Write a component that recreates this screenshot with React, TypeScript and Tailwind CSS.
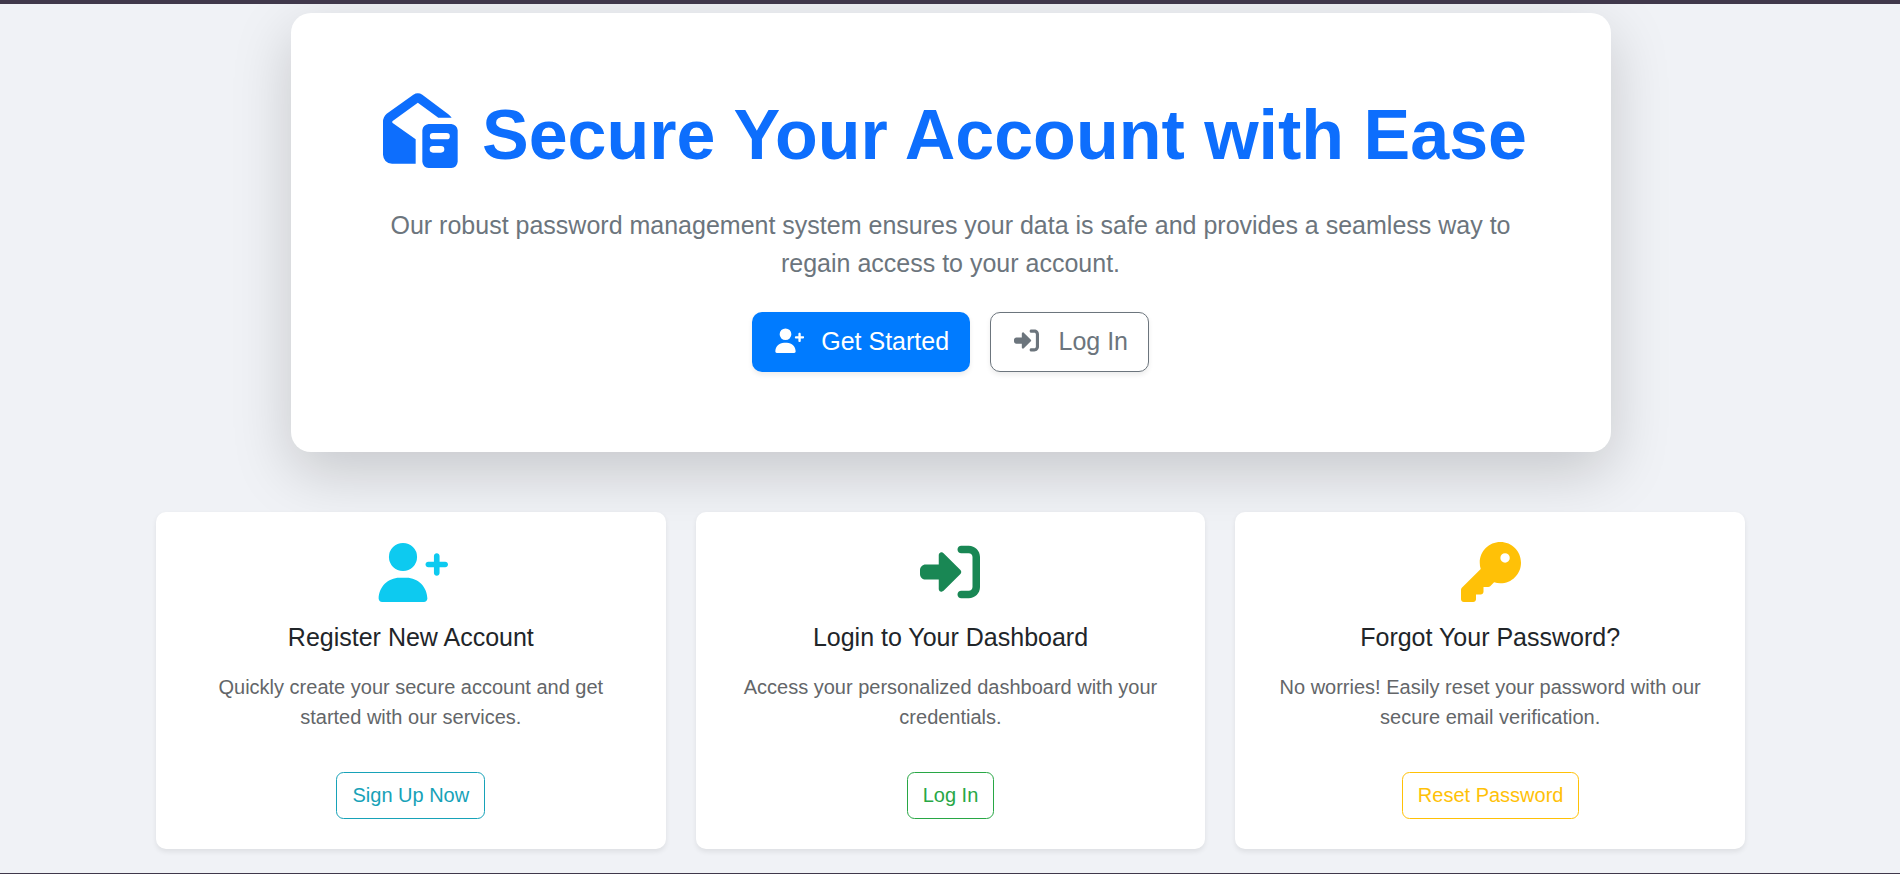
import React from "react";

type IconProps = { className?: string };

const UserPlus = ({ className }: IconProps) => (
  <svg viewBox="0 0 640 512" fill="currentColor" className={className} aria-hidden="true">
    <path d="M136 128a120 120 0 1 1 240 0 120 120 0 1 1-240 0zM48 482.3C48 383.8 127.8 304 226.3 304l59.4 0c98.5 0 178.3 79.8 178.3 178.3 0 16.4-13.3 29.7-29.7 29.7L77.7 512C61.3 512 48 498.7 48 482.3zM544 96c13.3 0 24 10.7 24 24l0 48 48 0c13.3 0 24 10.7 24 24s-10.7 24-24 24l-48 0 0 48c0 13.3-10.7 24-24 24s-24-10.7-24-24l0-48-48 0c-13.3 0-24-10.7-24-24s10.7-24 24-24l48 0 0-48c0-13.3 10.7-24 24-24z" />
  </svg>
);

const SignIn = ({ className }: IconProps) => (
  <svg viewBox="0 0 512 512" fill="currentColor" className={className} aria-hidden="true">
    <path d="M345 273c9.4-9.4 9.4-24.6 0-33.9L201 95c-6.9-6.9-17.2-8.9-26.2-5.2S160 102.3 160 112l0 80-112 0c-26.5 0-48 21.5-48 48l0 32c0 26.5 21.5 48 48 48l112 0 0 80c0 9.7 5.8 18.5 14.8 22.2s19.3 1.7 26.2-5.2L345 273zm7 143c-17.7 0-32 14.3-32 32s14.3 32 32 32l64 0c53 0 96-43 96-96l0-256c0-53-43-96-96-96l-64 0c-17.7 0-32 14.3-32 32s14.3 32 32 32l64 0c17.7 0 32 14.3 32 32l0 256c0 17.7-14.3 32-32 32l-64 0z" />
  </svg>
);

const Key = ({ className }: IconProps) => (
  <svg viewBox="0 0 512 512" fill="currentColor" className={className} aria-hidden="true">
    <path d="M336 352c97.2 0 176-78.8 176-176S433.2 0 336 0 160 78.8 160 176c0 18.7 2.9 36.8 8.3 53.7L7 391c-4.5 4.5-7 10.6-7 17l0 80c0 13.3 10.7 24 24 24l80 0c13.3 0 24-10.7 24-24l0-40 40 0c13.3 0 24-10.7 24-24l0-40 40 0c6.4 0 12.5-2.5 17-7l33.3-33.3c16.9 5.4 35 8.3 53.7 8.3zM376 96a40 40 0 1 1 0 80 40 40 0 1 1 0-80z" />
  </svg>
);

const HouseNote = ({ className }: IconProps) => (
  <svg viewBox="0 0 225 225" fill="currentColor" className={className} aria-hidden="true">
    <path d="M91 5Q104.500-3 118 5L196 64Q201 68 206 74H166L104.500 29.500L29 84Q26 87 29 90L98 139V212H27Q2 210 0 185V86Q0 72 11 62Z" />
    <path
      fillRule="evenodd"
      d="M137 93H205Q222 95 224 112V206Q222 223 205 225H137Q120 223 118 206V112Q120 95 137 93ZM150 120A9.500 9.500 0 0 0 150 139H191A9.500 9.500 0 0 0 191 120ZM150 159A9.500 9.500 0 0 0 150 179H174A9.500 9.500 0 0 0 174 159Z"
    />
  </svg>
);

const cards = [
  {
    icon: <UserPlus className="h-[60px] w-[75px] text-[#0dcaf0]" />,
    title: "Register New Account",
    text: "Quickly create your secure account and get started with our services.",
    action: "Sign Up Now",
    tone: "border-[#17a2b8] text-[#17a2b8]",
  },
  {
    icon: <SignIn className="h-[60px] w-[60px] text-[#198754]" />,
    title: "Login to Your Dashboard",
    text: "Access your personalized dashboard with your credentials.",
    action: "Log In",
    tone: "border-[#28a745] text-[#28a745]",
  },
  {
    icon: <Key className="ml-px h-[60px] w-[60px] text-[#ffc107]" />,
    title: "Forgot Your Password?",
    text: "No worries! Easily reset your password with our secure email verification.",
    action: "Reset Password",
    tone: "ml-px border-[#ffc107] text-[#ffc107]",
  },
];

export default function App() {
  return (
    <div className="flex h-[874px] w-[1900px] flex-col overflow-hidden border-t-4 border-b border-t-[#40384b] border-b-[#40384b] bg-[#f0f2f6] font-['Liberation_Sans',Arial,sans-serif]">
      <section className="mt-[9px] ml-[291px] flex h-[439px] w-[1320px] shrink-0 flex-col items-center rounded-[20px] bg-white px-[80px] pt-[80px] text-center shadow-[0_20px_60px_rgba(0,0,0,0.175)]">
        <h1 className="flex h-[84px] items-start pl-[8px] text-[70px] leading-[84px] font-bold whitespace-nowrap text-[#0d6efd]">
          <HouseNote className="mr-[24px] h-[75px] w-[75px]" />
          Secure Your Account with Ease
        </h1>
        <p className="mt-[30px] w-[1160px] pr-px text-[25px] leading-[37.5px] text-[#6c757d]">
          Our robust password management system ensures your data is safe and provides a seamless way to regain
          access to your account.
        </p>
        <div className="mt-[30px] flex gap-[20px] pr-[2px]">
          <button className="flex h-[60px] w-[218px] items-center rounded-[10px] bg-[#007bff] pl-[21px] text-[25px] text-white shadow-[0_2.500px_5px_rgba(0,0,0,0.075)]">
            <UserPlus className="mr-[17.5px] mb-[3px] h-[25px] w-[31.25px]" />
            Get Started
          </button>
          <button className="flex h-[60px] w-[159px] items-center rounded-[10px] border border-[#6c757d] bg-white pl-[23px] text-[25px] text-[#6c757d] shadow-[0_2.500px_5px_rgba(0,0,0,0.075)]">
            <SignIn className="mr-[20px] mb-[3px] h-[25px] w-[25px]" />
            Log In
          </button>
        </div>
      </section>

      <section className="mt-[60px] ml-[156px] grid w-[1589px] grid-cols-3 gap-[30px]">
        {cards.map((card) => (
          <article
            key={card.title}
            className="flex h-[337px] flex-col items-center rounded-[10px] bg-white p-[30px] text-center shadow-[0_2.500px_5px_rgba(0,0,0,0.075)]"
          >
            {card.icon}
            <h2 className="mt-[20px] text-[25px] leading-[30px] text-[#212529]">{card.title}</h2>
            <p className="mt-[20px] text-[20px] leading-[30px] text-[#636669]">{card.text}</p>
            <button
              className={`mt-[40px] h-[47px] rounded-[7.5px] border px-[15px] pb-[2px] text-[20px] leading-[30px] ${card.tone}`}
            >
              {card.action}
            </button>
          </article>
        ))}
      </section>
    </div>
  );
}
